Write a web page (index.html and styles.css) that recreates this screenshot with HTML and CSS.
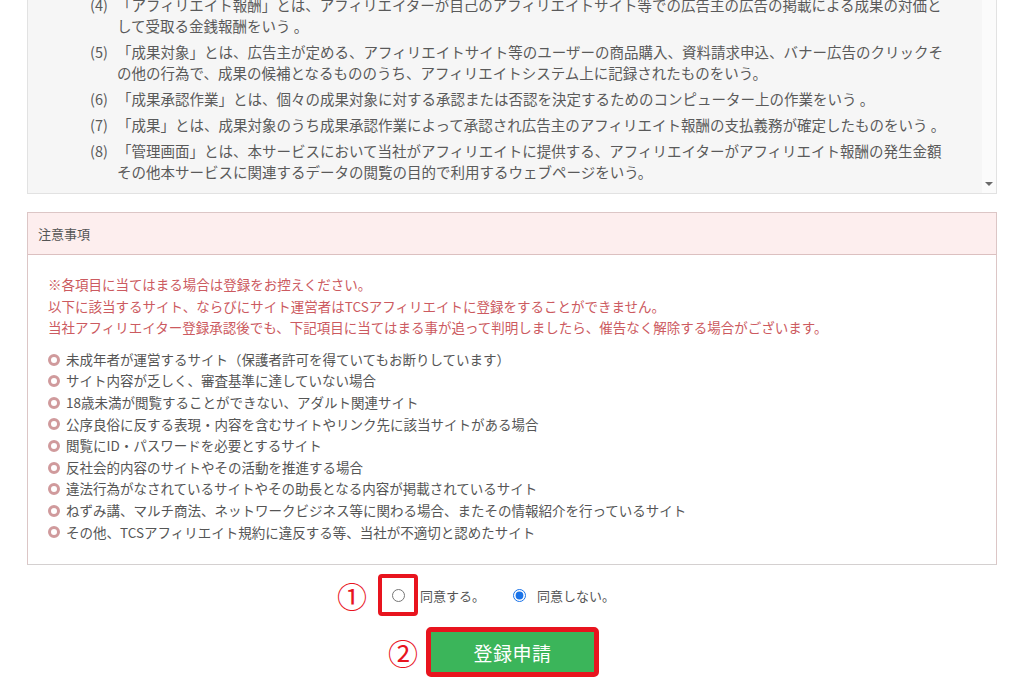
FILE: index.html
```html
<!DOCTYPE html>
<html lang="ja">
<head>
<meta charset="utf-8">
<title>登録申請</title>
<link rel="stylesheet" href="styles.css">
</head>
<body>
<div class="page">
  <div class="terms">
    <div class="terms-body">
      <div class="item"><span class="num">(4)</span><span class="txt">「アフィリエイト報酬」とは、アフィリエイターが自己のアフィリエイトサイト等での広告主の広告の掲載による成果の対価と<br>して受取る金銭報酬をいう 。</span></div>
      <div class="item"><span class="num">(5)</span><span class="txt">「成果対象」とは、広告主が定める、アフィリエイトサイト等のユーザーの商品購入、資料請求申込、バナー広告のクリックそ<br>の他の行為で、成果の候補となるもののうち、アフィリエイトシステム上に記録されたものをいう。</span></div>
      <div class="item"><span class="num">(6)</span><span class="txt">「成果承認作業」とは、個々の成果対象に対する承認または否認を決定するためのコンピューター上の作業をいう 。</span></div>
      <div class="item"><span class="num">(7)</span><span class="txt">「成果」とは、成果対象のうち成果承認作業によって承認され広告主のアフィリエイト報酬の支払義務が確定したものをいう 。</span></div>
      <div class="item"><span class="num">(8)</span><span class="txt">「管理画面」とは、本サービスにおいて当社がアフィリエイトに提供する、アフィリエイターがアフィリエイト報酬の発生金額<br>その他本サービスに関連するデータの閲覧の目的で利用するウェブページをいう。</span></div>
    </div>
    <div class="scrollbar"><span class="arrow"></span></div>
  </div>

  <div class="notice">
    <div class="notice-head">注意事項</div>
    <div class="notice-body">
      <p class="warn">※各項目に当てはまる場合は登録をお控えください。<br>以下に該当するサイト、ならびにサイト運営者はTCSアフィリエイトに登録をすることができません。<br>当社アフィリエイター登録承認後でも、下記項目に当てはまる事が追って判明しましたら、催告なく解除する場合がございます。</p>
      <ul class="rules">
        <li>未成年者が運営するサイト（保護者許可を得ていてもお断りしています）</li>
        <li>サイト内容が乏しく、審査基準に達していない場合</li>
        <li>18歳未満が閲覧することができない、アダルト関連サイト</li>
        <li>公序良俗に反する表現・内容を含むサイトやリンク先に該当サイトがある場合</li>
        <li>閲覧にID・パスワードを必要とするサイト</li>
        <li>反社会的内容のサイトやその活動を推進する場合</li>
        <li>違法行為がなされているサイトやその助長となる内容が掲載されているサイト</li>
        <li>ねずみ講、マルチ商法、ネットワークビジネス等に関わる場合、またその情報紹介を行っているサイト</li>
        <li>その他、TCSアフィリエイト規約に違反する等、当社が不適切と認めたサイト</li>
      </ul>
    </div>
  </div>

  <div class="agree-row">
    <span class="mark">①</span>
    <span class="hl-box"><input type="radio" name="agree" class="radio"></span>
    <label class="opt">同意する。</label>
    <input type="radio" name="agree" class="radio radio2" checked>
    <label class="opt">同意しない。</label>
  </div>

  <div class="submit-row">
    <span class="mark">②</span>
    <span class="hl-btn"><button class="btn" type="button">登録申請</button></span>
  </div>
</div>
</body>
</html>
```

FILE: styles.css
```css
html, body {
  margin: 0;
  padding: 0;
  background: #ffffff;
}
body {
  font-family: "Noto Sans CJK JP", "Noto Sans", sans-serif;
  color: #555555;
  width: 1024px;
  height: 684px;
  overflow: hidden;
}
.page {
  width: 970px;
  margin-left: 27px;
}

/* terms scroll box */
.terms {
  display: flex;
  height: 204px;
  margin-top: -12px;
  background: #f6f6f6;
  border: 1px solid #e2e2e2;
  overflow: hidden;
}
.terms-body {
  flex: 1;
  padding: 5px 0 0 62px;
  font-size: 14.5px;
  line-height: 21px;
  color: #5a5a5a;
  overflow: hidden;
}
.item {
  display: flex;
  margin-bottom: 5px;
  white-space: nowrap;
}
.num {
  width: 27px;
  flex: none;
}
.scrollbar {
  width: 14px;
  flex: none;
  background: #fbfbfb;
  display: flex;
  flex-direction: column;
  justify-content: flex-end;
  align-items: center;
  padding-bottom: 7px;
}
.arrow {
  width: 0;
  height: 0;
  border-left: 4px solid transparent;
  border-right: 4px solid transparent;
  border-top: 4px solid #6a6a6a;
}

/* notice panel */
.notice {
  margin-top: 18px;
  border: 1px solid #dcc6c6;
  border-bottom-color: #d4d0d0;
  background: #ffffff;
}
.notice-head {
  height: 41px;
  line-height: 41px;
  padding-left: 10px;
  background: #fdeeee;
  border-bottom: 1px solid #dcc0c0;
  font-size: 13px;
  color: #555555;
}
.notice-body {
  padding: 19px 20px 21px 20px;
  font-size: 13.5px;
  line-height: 21.6px;
}
.warn {
  margin: 0 0 10px 0;
  color: #cc5a60;
}
.rules {
  list-style: none;
  margin: 0;
  padding: 0;
  color: #555555;
}
.rules li {
  display: flex;
  align-items: center;
  gap: 6px;
}
.rules li::before {
  content: "";
  width: 6px;
  height: 6px;
  border: 3px solid #d09a9c;
  border-radius: 50%;
  flex: none;
}

/* agree row */
.agree-row {
  display: flex;
  align-items: center;
  margin-top: 8px;
  padding-left: 310px;
  height: 44px;
  font-size: 13px;
  color: #555555;
}
.mark {
  color: #e8141e;
  font-size: 30px;
  line-height: 1;
  width: 34px;
  flex: none;
}
.agree-row .mark {
  margin-right: 7px;
}
.hl-box {
  width: 32px;
  height: 34px;
  border: 4px solid #e8141e;
  border-radius: 4px;
  display: flex;
  align-items: center;
  justify-content: center;
  flex: none;
}
.radio {
  width: 13px;
  height: 13px;
  margin: 0;
  accent-color: #1a73e8;
}
.opt {
  margin-left: 2px;
}
.radio2 {
  margin-left: 28px;
  margin-right: 9px;
}

/* submit */
.submit-row {
  display: flex;
  align-items: center;
  margin-top: 10px;
  padding-left: 361px;
}
.submit-row .mark {
  margin-right: 4px;
}
.hl-btn {
  display: block;
  border: 5px solid #e8141e;
  border-radius: 5px;
  padding: 0;
}
.btn {
  display: block;
  width: 163px;
  height: 40px;
  border: none;
  background: #3bb55a;
  color: #ffffff;
  font-family: "Noto Sans CJK JP", sans-serif;
  font-size: 19px;
  letter-spacing: 0.5px;
}
```
